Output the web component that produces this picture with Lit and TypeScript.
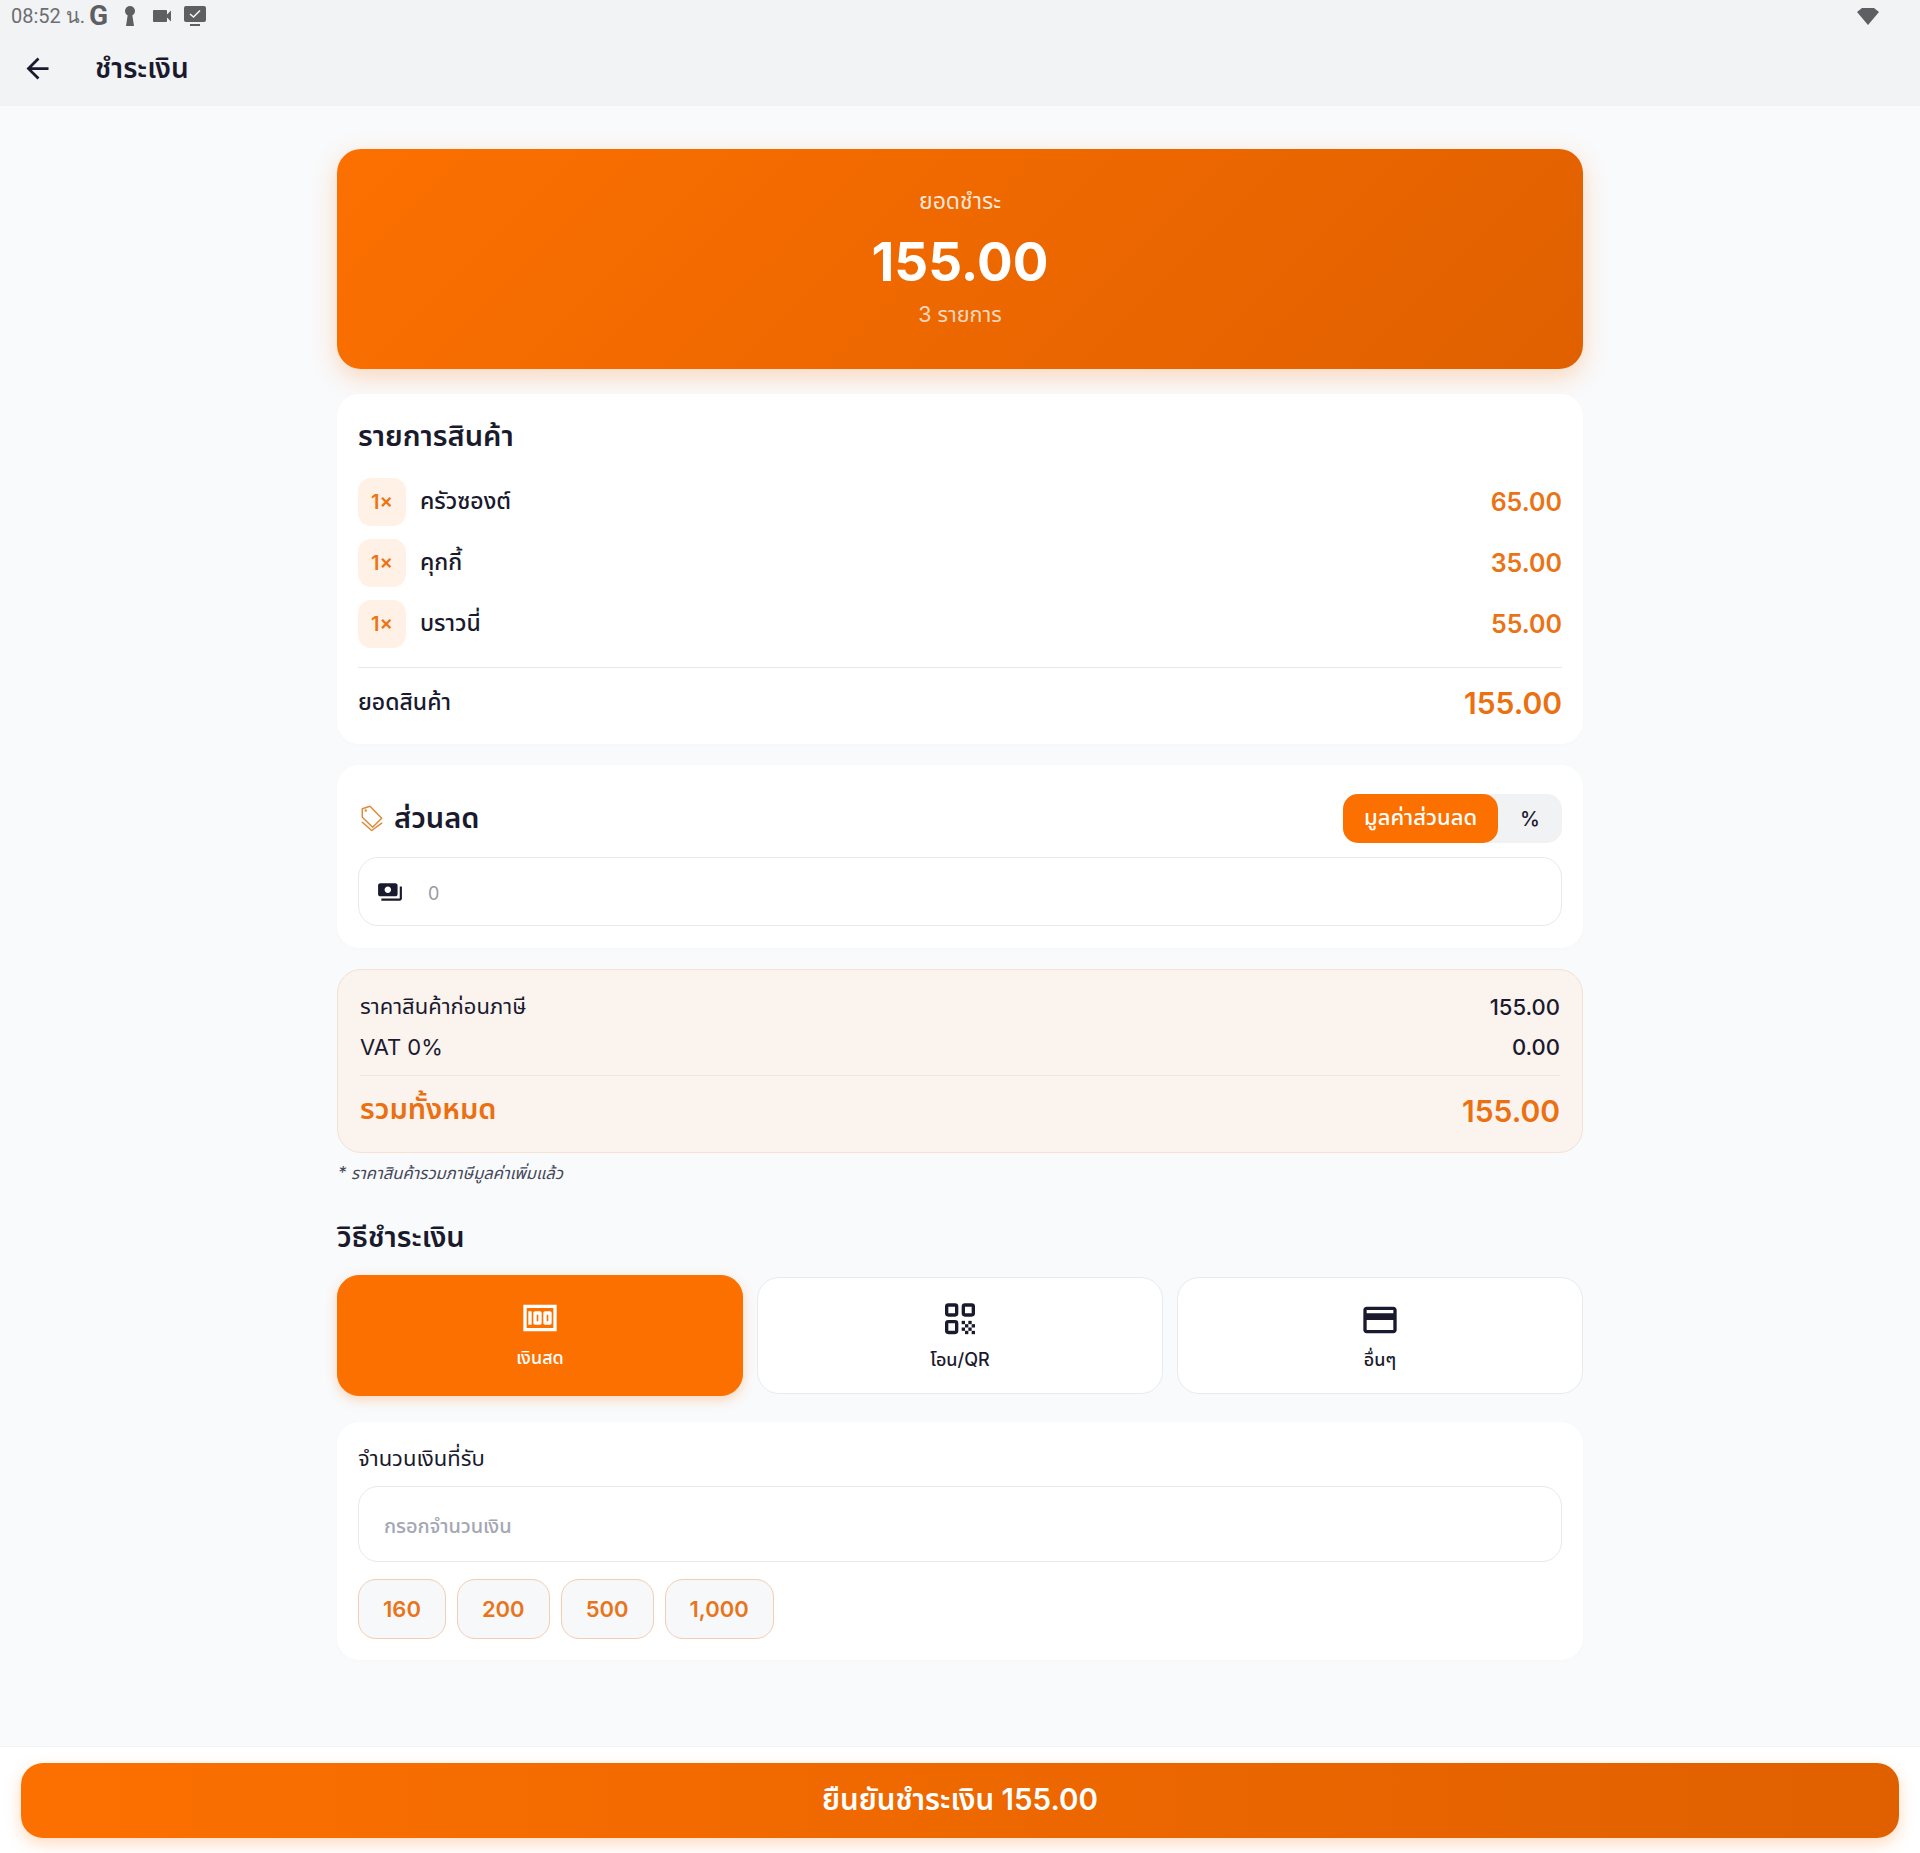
import { LitElement, html, css, svg } from 'lit';
import { customElement, state } from 'lit/decorators.js';

const ITEMS = [
  { qty: 1, name: 'ครัวซองต์', price: '65.00' },
  { qty: 1, name: 'คุกกี้', price: '35.00' },
  { qty: 1, name: 'บราวนี่', price: '55.00' },
];
const QUICK = ['160', '200', '500', '1,000'];

const icon = (d: string, size: number) => html`<svg width=${size} height=${size} viewBox="0 0 24 24" fill="currentColor">${svg`<path d=${d}></path>`}</svg>`;

const ICONS = {
  back: 'M20 11H7.83l5.59-5.59L12 4l-8 8 8 8 1.41-1.41L7.83 13H20v-2z',
  money: 'M5 8h2v8H5zm7 0H9c-.55 0-1 .45-1 1v6c0 .55.45 1 1 1h3c.55 0 1-.45 1-1V9c0-.55-.45-1-1-1zm-1 6h-1v-4h1v4zm7-6h-3c-.55 0-1 .45-1 1v6c0 .55.45 1 1 1h3c.55 0 1-.45 1-1V9c0-.55-.45-1-1-1zm-1 6h-1v-4h1v4zM2 4v16h20V4H2zm2 14V6h16v12H4z',
  card: 'M20 4H4c-1.11 0-1.99.89-1.99 2L2 18c0 1.11.89 2 2 2h16c1.11 0 2-.89 2-2V6c0-1.11-.89-2-2-2zm0 14H4v-6h16v6zm0-10H4V6h16v2z',
  payments: 'M19 14V6c0-1.1-.9-2-2-2H3c-1.1 0-2 .9-2 2v8c0 1.1.9 2 2 2h14c1.1 0 2-.9 2-2zm-9-1c-1.66 0-3-1.34-3-3s1.34-3 3-3 3 1.34 3 3-1.34 3-3 3zm13-6v11c0 1.1-.9 2-2 2H4v-2h17V7h2z',
  video: 'M17 10.5V7c0-.55-.45-1-1-1H4c-.55 0-1 .45-1 1v10c0 .55.45 1 1 1h12c.55 0 1-.45 1-1v-3.5l4 4v-11l-4 4z',
};

// qr icon: three rounded finders and a small checker in the last corner
const qrIcon = html`<svg width="40" height="40" viewBox="0 0 24 24">
  <g fill="none" stroke="currentColor" stroke-width="2">
    <rect x="4" y="3" width="6" height="6" rx="1"></rect>
    <rect x="14" y="3" width="6" height="6" rx="1"></rect>
    <rect x="4" y="13" width="6" height="6.5" rx="1"></rect>
  </g>
  <g fill="currentColor">
    <rect x="13" y="12.5" width="2" height="2"></rect><rect x="17" y="12.5" width="2" height="2"></rect>
    <rect x="15" y="14.5" width="2" height="2"></rect><rect x="19" y="14.5" width="2" height="2"></rect>
    <rect x="13" y="16.5" width="2" height="2"></rect><rect x="17" y="16.5" width="2" height="2"></rect>
    <rect x="15" y="18.5" width="2" height="2"></rect><rect x="19" y="18.5" width="2" height="2"></rect>
  </g>
</svg>`;

@customElement('app-root')
export class AppRoot extends LitElement {
  @state() method = 'cash';

  static styles = css`
    :host {
      display: flex;
      flex-direction: column;
      min-height: 100vh;
      background: #f9fafb;
      color: #1a1a2e;
      font-family: Inter, "Noto Sans", "Noto Sans Thai", "DejaVu Sans", sans-serif;
    }
    svg { display: block; }

    .top { background: #f2f3f5; height: 106px; flex: none; }
    .status {
      height: 32px;
      display: flex;
      align-items: center;
      padding: 0 40px 0 11px;
      gap: 9px;
      color: #5d5f62;
    }
    .clock { font: 20px Roboto, "Noto Sans", "DejaVu Sans", sans-serif; color: #6c6e71; margin-right: -5px; }
    .g { font: 700 28px Roboto, sans-serif; width: 21px; line-height: 30px; }
    .wifi { margin-left: auto; }
    .bar { display: flex; align-items: center; height: 72px; padding-left: 21px; }
    .bar h1 { margin: 0 0 0 41px; font-size: 28px; font-weight: 600; line-height: 1; }

    main {
      flex: 1;
      width: 1246px;
      margin: 0 auto;
      padding-top: 43px;
      display: flex;
      flex-direction: column;
    }

    .hero {
      height: 220px;
      border-radius: 24px;
      background: linear-gradient(135deg, #fc7000, #e06000);
      box-shadow: 0 8px 24px rgba(255, 112, 0, .25);
      color: #fff;
      text-align: center;
      display: flex;
      flex-direction: column;
      align-items: center;
    }
    .hero .lbl { margin-top: 37px; font-size: 23px; line-height: 30px; color: rgba(255,255,255,.85); }
    .hero .amt { margin-top: 12px; font-size: 53px; font-weight: 700; line-height: 68px; }
    .hero .cnt { margin-top: 3px; font-size: 21.5px; line-height: 30px; color: rgba(255,255,255,.75); }

    .card {
      background: #fff;
      border-radius: 22px;
      padding: 0 21px;
      box-shadow: 0 1px 6px rgba(0,0,0,.015);
    }
    .items { margin-top: 25px; height: 350px; box-sizing: border-box; padding-top: 22px; }
    .items h2 { margin: 0 0 22px; font-size: 29px; font-weight: 600; line-height: 40px; }
    .row { display: flex; align-items: center; height: 48px; margin-bottom: 13px; }
    .qty {
      width: 48px; height: 48px; flex: none;
      border-radius: 13px;
      background: #fff1e6;
      color: #ee7412;
      font-size: 20px; font-weight: 600;
      display: flex; align-items: center; justify-content: center;
    }
    .name { margin-left: 14px; flex: 1; font-size: 23px; font-weight: 500; }
    .price { font-size: 25px; font-weight: 600; color: #ea7315; }
    .sub {
      border-top: 1px solid #e7e8ea;
      margin-top: 19px;
      padding-top: 17px;
      display: flex; justify-content: space-between; align-items: center;
      font-size: 23px; font-weight: 500;
    }
    .sub b { font-size: 30px; font-weight: 600; color: #ea7011; }

    .discount { margin-top: 21px; height: 183px; box-sizing: border-box; padding-top: 29px; }
    .dhead { display: flex; align-items: center; height: 49px; }
    .dhead svg { color: #df8a3a; margin: 0 11px 0 1px; }
    .dhead h2 { flex: 1; margin: 0; font-size: 29px; font-weight: 600; }
    .toggle { display: flex; height: 49px; width: 219px; border-radius: 15px; background: #f1f2f4; }
    .toggle span { display: flex; align-items: center; justify-content: center; font-size: 22px; font-weight: 500; }
    .toggle .on { width: 155px; border-radius: 15px; background: #fc7000; color: #fff; }
    .toggle .off { flex: 1; font-size: 20px; }
    .field {
      display: flex; align-items: center;
      border: 1px solid #e8e9ec;
      border-radius: 20px;
      background: #fff;
      box-sizing: border-box;
    }
    .dinput { margin-top: 14px; height: 69px; padding-left: 18px; gap: 25px; }
    input {
      flex: 1; border: 0; outline: 0; background: none; min-width: 0;
      font: inherit; color: inherit; padding: 0;
    }
    .dinput input { font-size: 18px; padding-top: 3px; }
    .dinput input::placeholder { color: #9a9a9e; }

    .summary {
      margin-top: 21px;
      height: 184px;
      box-sizing: border-box;
      padding: 17px 22px 0;
      background: #faf3ee;
      border: 1px solid #f6e1d2;
      border-radius: 24px;
    }
    .sline { display: flex; justify-content: space-between; align-items: center; font-size: 22px; height: 40px; }
    .sline span:last-child { font-size: 22px; font-weight: 500; }
    .stotal {
      border-top: 1px solid #eee6e0;
      margin-top: 8px;
      padding-top: 12px;
      display: flex; justify-content: space-between; align-items: center;
      color: #ea7011; font-size: 29px; font-weight: 600;
    }
    .stotal span:last-child { font-size: 30px; margin-top: 2px; }
    .note { margin: 8px 0 0 1px; font-size: 16.6px; line-height: 24px; font-style: italic; color: #44465a; }
    .ptitle { margin: 30px 0 0; font-size: 29px; font-weight: 600; line-height: 44px; }

    .methods {
      margin-top: 16px;
      display: grid;
      grid-template-columns: repeat(3, 1fr);
      gap: 14px;
      align-items: center;
    }
    .method {
      height: 117px;
      border: 1px solid #e9eaec;
      border-radius: 22px;
      background: #fff;
      display: flex; flex-direction: column; align-items: center;
      padding-top: 22px;
      box-sizing: border-box;
      font-size: 18px; font-weight: 500;
      gap: 7px;
    }
    .method.on {
      height: 121px;
      background: #fc7000;
      border-color: #fc7000;
      color: #fff;
      box-shadow: 0 4px 12px rgba(255,112,0,.25);
    }

    .received { margin-top: 26px; height: 238px; box-sizing: border-box; padding-top: 20px; }
    .rlabel { font-size: 22px; line-height: 32px; }
    .rinput { margin-top: 12px; height: 76px; padding-left: 25px; font-size: 20px; }
    .rinput input { letter-spacing: -.1px; padding-top: 3px; }
    .rinput input::placeholder { color: #a4a7b3; font-weight: 500; }
    .chips { display: flex; gap: 11px; margin-top: 17px; }
    .chip {
      height: 58px; padding: 0 24px;
      display: flex; align-items: center;
      border: 1px solid #f3cdb1;
      border-radius: 18px;
      background: #f7f8fa;
      color: #e8751a;
      font-size: 22px; font-weight: 600;
    }

    footer {
      flex: none;
      height: 107px;
      box-sizing: border-box;
      background: #fff;
      padding: 16px 21px 0;
      border-top: 1px solid #f1f2f4;
    }
    .pay {
      height: 75px;
      border-radius: 22px;
      background: linear-gradient(90deg, #fc7000, #e06000);
      box-shadow: 0 6px 16px rgba(255,112,0,.25);
      color: #fff;
      font-size: 29.5px; font-weight: 600;
      display: flex; align-items: center; justify-content: center;
    }
  `;

  render() {
    return html`
      <div class="top">
        <div class="status">
          <span class="clock">08:52 น.</span>
          <span class="g">G</span>
          <svg width="22" height="24" viewBox="0 0 22 24" fill="currentColor"><circle cx="11" cy="7" r="5"></circle><path d="M9 9h4l2 13H7z"></path></svg>
          ${icon(ICONS.video, 24)}
          <svg width="24" height="24" viewBox="0 0 24 24"><rect x="1" y="2" width="22" height="16" rx="2" fill="currentColor"></rect><path d="M7 10l3.5 3L17 6.5" fill="none" stroke="#f2f3f5" stroke-width="1.6"></path><rect x="7" y="20" width="10" height="2" fill="currentColor"></rect></svg>
          <svg class="wifi" width="24" height="20" viewBox="0 0 24 20" fill="currentColor"><path d="M1 6l5-4h12l5 4-11 13z"></path></svg>
        </div>
        <div class="bar">
          ${icon(ICONS.back, 33)}
          <h1>ชำระเงิน</h1>
        </div>
      </div>

      <main>
        <section class="hero">
          <div class="lbl">ยอดชำระ</div>
          <div class="amt">155.00</div>
          <div class="cnt">3 รายการ</div>
        </section>

        <section class="card items">
          <h2>รายการสินค้า</h2>
          ${ITEMS.map(i => html`
            <div class="row">
              <span class="qty">${i.qty}×</span>
              <span class="name">${i.name}</span>
              <span class="price">${i.price}</span>
            </div>
          `)}
          <div class="sub"><span>ยอดสินค้า</span><b>155.00</b></div>
        </section>

        <section class="card discount">
          <div class="dhead">
            <svg width="24" height="28" viewBox="0 0 24 28" fill="none" stroke="currentColor" stroke-width="1.5" stroke-linejoin="round" stroke-linecap="round">
              <path d="M3.3 3.8 11 1.2 22.7 13.2 13.7 22.2 3.3 12.2z"></path>
              <circle cx="6.7" cy="5.5" r=".5"></circle>
              <path d="M3.3 17.2 12.7 25.5 22.7 18.2"></path>
            </svg>
            <h2>ส่วนลด</h2>
            <div class="toggle"><span class="on">มูลค่าส่วนลด</span><span class="off">%</span></div>
          </div>
          <div class="field dinput">
            ${icon(ICONS.payments, 26)}
            <input placeholder="0" />
          </div>
        </section>

        <section class="summary">
          <div class="sline"><span>ราคาสินค้าก่อนภาษี</span><span>155.00</span></div>
          <div class="sline"><span>VAT 0%</span><span>0.00</span></div>
          <div class="stotal"><span>รวมทั้งหมด</span><span>155.00</span></div>
        </section>
        <div class="note">* ราคาสินค้ารวมภาษีมูลค่าเพิ่มแล้ว</div>

        <h2 class="ptitle">วิธีชำระเงิน</h2>
        <div class="methods">
          <div class="method on">${icon(ICONS.money, 40)}<span>เงินสด</span></div>
          <div class="method">${qrIcon}<span>โอน/QR</span></div>
          <div class="method">${icon(ICONS.card, 40)}<span>อื่นๆ</span></div>
        </div>

        <section class="card received">
          <div class="rlabel">จำนวนเงินที่รับ</div>
          <div class="field rinput"><input placeholder="กรอกจำนวนเงิน" /></div>
          <div class="chips">${QUICK.map(q => html`<span class="chip">${q}</span>`)}</div>
        </section>
      </main>

      <footer><div class="pay">ยืนยันชำระเงิน 155.00</div></footer>
    `;
  }
}
